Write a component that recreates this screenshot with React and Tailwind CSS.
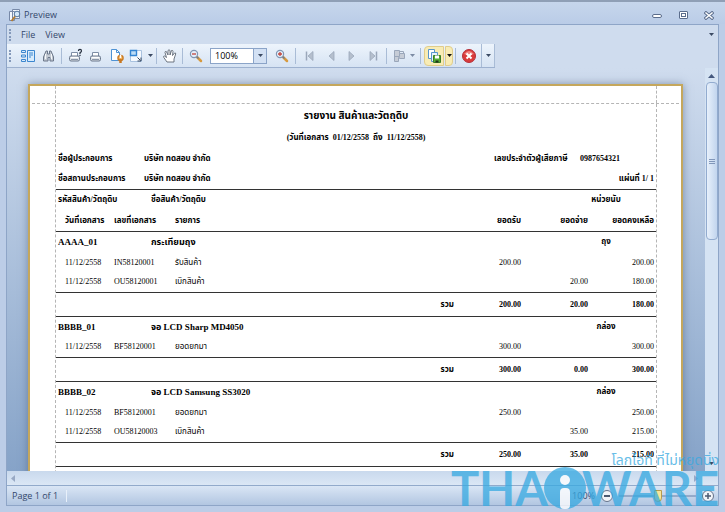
import React from 'react';

const groups = [
  {
    code: 'AAAA_01', name: 'กระเทียมถุง', unit: 'ถุง',
    rows: [
      ['11/12/2558', 'IN58120001', 'รับสินค้า', '200.00', '', '200.00'],
      ['11/12/2558', 'OU58120001', 'เบิกสินค้า', '', '20.00', '180.00'],
    ],
    total: ['200.00', '20.00', '180.00'],
  },
  {
    code: 'BBBB_01', name: 'จอ LCD Sharp MD4050', unit: 'กล่อง',
    rows: [['11/12/2558', 'BF58120001', 'ยอดยกมา', '300.00', '', '300.00']],
    total: ['300.00', '0.00', '300.00'],
  },
  {
    code: 'BBBB_02', name: 'จอ LCD Samsung SS3020', unit: 'กล่อง',
    rows: [
      ['11/12/2558', 'BF58120001', 'ยอดยกมา', '250.00', '', '250.00'],
      ['11/12/2558', 'OU58120003', 'เบิกสินค้า', '', '35.00', '215.00'],
    ],
    total: ['250.00', '35.00', '215.00'],
  },
];

function Svg({ children, w = 16 }) {
  return (
    <svg width={w} height="16" viewBox={`0 0 ${w} 16`} fill="none" aria-hidden="true">
      {children}
    </svg>
  );
}

function Tool({ label, children }) {
  return (
    <button type="button" aria-label={label} className="flex h-5 w-[21px] shrink-0 items-center justify-center">
      {children}
    </button>
  );
}

function Sep({ wide }) {
  return <span className={`${wide ? 'mx-[3px]' : 'mx-0.5'} h-4 w-px shrink-0 bg-[#a9bcd6]`} />;
}

function Caret({ color = '#3b4a63' }) {
  return (
    <svg width="5" height="3" viewBox="0 0 5 3" aria-hidden="true">
      <path d="M0 0h5L2.500 3z" fill={color} />
    </svg>
  );
}

function Grip() {
  return <span className="ml-0.5 mr-1.5 h-3 w-0 shrink-0 border-l-2 border-dotted border-[#8499ba]" />;
}

function Nav({ label, flip, bar }) {
  return (
    <Tool label={label}>
      <svg width="12" height="12" viewBox="0 0 12 12" className={flip ? '-scale-x-100' : ''} aria-hidden="true">
        {bar && <path d="M2.500 1.500v9" stroke="#9aa7ba" strokeWidth="1.500" />}
        <path d="M9 1.500v9L4 6z" fill="#b5bfcd" stroke="#9aa7ba" strokeWidth="0.800" />
      </svg>
    </Tool>
  );
}

function Magnifier({ plus }) {
  return (
    <Svg>
      <path d="M9 9l4 4" stroke="#d79a3e" strokeWidth="2.500" strokeLinecap="round" />
      <path d="M8.500 8.500l2 2" stroke="#6c7c93" strokeWidth="1.500" />
      <circle cx="6" cy="6" r="3.600" fill="#e4effb" stroke="#8196b3" strokeWidth="1.200" />
      <path d={plus ? 'M4 6h4M6 4v4' : 'M4 6h4'} stroke="#c2453c" strokeWidth="1.300" />
    </Svg>
  );
}

function Printer({ query }) {
  return (
    <Svg>
      <path d="M4.500 8V4.500h6V8" fill="#fff" stroke="#7e8ea6" />
      <rect x="2.500" y="8" width="10" height="5" rx="1.500" fill="#dfe3e8" stroke="#69778c" />
      <path d="M4 11.500h7" stroke="#8a96a8" />
      <path d="M4 9.500h7" stroke="#fff" />
      {query && <path d="M11.500 3q0-1.700 1.500-1.700T14.500 3q0 1-1.500 1.700V6M13 6.800V8" stroke="#26303f" strokeWidth="1.200" />}
    </Svg>
  );
}

function TitleBar() {
  return (
    <header className="flex h-6 shrink-0 items-center border-t-2 border-[#8f9fb6] bg-linear-to-b from-[#c6d6ec] to-[#bacce7] pl-2 pt-1 pr-2">
      <Svg w={14}>
        <path d="M1.500 4.500h5v9h-5zM4.500 2.500h7v9h-7z" fill="#f4f8fd" stroke="#7789a8" />
        <circle cx="9" cy="7" r="2.800" fill="#d4e8fa" stroke="#56789f" />
        <path d="M7 9.500L3.500 14" stroke="#b27c32" strokeWidth="2" />
      </Svg>
      <h1 className="ml-0.5 flex-1 text-[9px] leading-4 text-[#33476b]">Preview</h1>
      <div className="flex items-center gap-2.5">
        <button type="button" aria-label="Minimize" className="flex w-4 justify-center pt-0.5">
          <span className="h-1 w-2.5 rounded-sm border border-[#5b6d8c] bg-white" />
        </button>
        <button type="button" aria-label="Maximize" className="flex w-4 justify-center">
          <span className="flex h-2 w-[9px] items-center justify-center rounded-[1px] border border-[#5b6d8c] bg-white">
            <span className="h-1 w-[5px] border border-[#5b6d8c]" />
          </span>
        </button>
        <button type="button" aria-label="Close" className="flex w-4 justify-center">
          <svg width="10" height="9" viewBox="0 0 10 9" aria-hidden="true">
            <path d="M2 2l6 5M8 2L2 7" stroke="#5b6d8c" strokeWidth="3.400" strokeLinecap="square" />
            <path d="M2 2l6 5M8 2L2 7" stroke="#fff" strokeWidth="1.500" strokeLinecap="square" />
          </svg>
        </button>
      </div>
    </header>
  );
}

function Toolbar() {
  return (
    <div role="toolbar" aria-label="Preview tools" className="flex h-6 w-fit shrink-0 items-center border-b border-[#9db1cf] bg-linear-to-b from-[#edf4fc] to-[#d6e3f3]">
      <Grip />
      <Tool label="Document map">
        <Svg>
          <path d="M1.500 2.500h4v2h-4zM1.500 7h4v2h-4zM1.500 11.500h4v2h-4zM7.500 2.500h7v11h-7z" fill="#d7ebfc" stroke="#3b86cf" />
          <path d="M9 5h4M9 7h4M9 9h2" stroke="#3b86cf" />
        </Svg>
      </Tool>
      <Tool label="Search">
        <Svg>
          <path d="M5 3h1.500v3h2V3H10l2.500 6v4H9V9.500H7V13H2.500V9z" fill="#c3cad3" stroke="#6b778a" />
          <path d="M4.500 6v5M10.500 6v5" stroke="#f6f8fa" />
        </Svg>
      </Tool>
      <Sep />
      <Tool label="Print"><Printer query /></Tool>
      <Tool label="Quick print"><Printer /></Tool>
      <Tool label="Page setup">
        <Svg>
          <path d="M2.500 1.500h5l3 3v8h-8z" fill="#fff" stroke="#4f93d4" />
          <path d="M7.500 1.500v3h3" stroke="#4f93d4" />
          <circle cx="11.500" cy="10" r="2.600" fill="#f2b35b" stroke="#c87822" strokeWidth="1.300" />
          <path d="M11.500 11v4" stroke="#c87822" strokeWidth="2.500" />
          <path d="M11.500 7v3" stroke="#fff" strokeWidth="1.500" />
        </Svg>
      </Tool>
      <button type="button" aria-label="Scale" className="flex h-5 w-[27px] shrink-0 items-center justify-center gap-1">
        <Svg>
          <path d="M2.500 2.500h11v11h-11z" fill="#f5f9fe" stroke="#a9c2df" />
          <path d="M2.500 2.500h6v5h-6z" fill="#bcdcf6" stroke="#3384d3" strokeWidth="1.400" />
          <path d="M9.500 9.500l3 3M13 9.500V13H9.500" stroke="#33445f" />
        </Svg>
        <Caret />
      </button>
      <Sep />
      <Tool label="Hand tool">
        <Svg>
          <path d="M5 14L1.800 9.500Q1 8 2.500 8l2 1.500L3 4.500Q3 3 4.300 3.500L6 7V2.500Q7 1 8 2.500V7l1.500-4.500Q11 2 11 3.500L10.500 7.500 12.500 5Q14 4.500 13.700 6L12 11v3z" fill="#fff" stroke="#5f6874" strokeWidth="0.900" />
        </Svg>
      </Tool>
      <Sep />
      <Tool label="Zoom out"><Magnifier /></Tool>
      <div className="mx-1 grid h-4 w-[57px] shrink-0 grid-cols-[1fr_13px] border border-[#8ba4c8] bg-white">
        <select aria-label="Zoom" defaultValue="100%" className="col-span-2 col-start-1 row-start-1 appearance-none bg-transparent pl-1 text-[9px] leading-[14px] text-black">
          <option>50%</option>
          <option>100%</option>
          <option>200%</option>
        </select>
        <span className="pointer-events-none col-start-2 row-start-1 flex items-center justify-center border-l border-[#8ba4c8] bg-[#d3e1f4]">
          <Caret />
        </span>
      </div>
      <Tool label="Zoom in"><Magnifier plus /></Tool>
      <Sep wide />
      <Nav label="First page" bar />
      <Nav label="Previous page" />
      <Nav label="Next page" flip />
      <Nav label="Last page" flip bar />
      <Sep wide />
      <button type="button" aria-label="Multiple pages" className="flex h-5 w-[27px] shrink-0 items-center justify-center gap-1">
        <Svg w={14}>
          <path d="M2.500 2.500h5v3h5v5h-5v-1h-1v4h-4z" fill="#c6ccd6" stroke="#9aa7ba" />
          <path d="M7.500 3.500h4v2M2.500 8.500h5v-3" stroke="#9aa7ba" />
        </Svg>
        <Caret color="#7c8ba4" />
      </button>
      <Sep wide />
      <button type="button" aria-label="Export" className="flex h-5 w-5 shrink-0 items-center justify-center rounded-l-sm border border-[#e0cd8c] bg-[#f8ecb5]">
        <Svg>
          <path d="M2.500 1.500h6v9h-6z" fill="#fff" stroke="#5796cc" />
          <path d="M5.500 4.500h6v9h-6z" fill="#e8f3fd" stroke="#5796cc" />
          <path d="M7.500 7.500h7v7h-7z" fill="#55ab35" stroke="#3b7e27" />
          <path d="M9 7.500h4v3H9z" fill="#fff" />
          <path d="M9.500 12.500h3v2h-3z" fill="#1d321b" />
        </Svg>
      </button>
      <button type="button" aria-label="Export options" className="ml-px flex h-5 w-2 shrink-0 items-center justify-center rounded-r-sm border border-[#e0cd8c] bg-[#f8ecb5]">
        <Caret color="#111" />
      </button>
      <Sep />
      <Tool label="Close preview">
        <Svg>
          <circle cx="8" cy="8" r="6.500" fill="#d93b3b" stroke="#b5303a" />
          <path d="M3 6q5-6 10 0q-5 2-10 0" fill="#ee8583" />
          <path d="M5.500 5.500l5 5M10.500 5.500l-5 5" stroke="#fff" strokeWidth="2" />
        </Svg>
      </Tool>
      <button type="button" aria-label="Toolbar options" className="ml-0.5 flex h-full w-3.5 shrink-0 items-center justify-center border-x border-[#a9bcd6]">
        <Caret />
      </button>
    </div>
  );
}

function ReportTable() {
  return (
    <table className="w-full table-fixed border-collapse text-left text-[8px] leading-3 whitespace-nowrap">
      <colgroup>
        <col className="w-[57px]" />
        <col className="w-[37px]" />
        <col className="w-6" />
        <col />
        <col className="w-[54px]" />
        <col className="w-[67px]" />
        <col className="w-[67px]" />
        <col className="w-9" />
        <col className="w-8" />
      </colgroup>
      <thead>
        <tr className="h-[21px] border-t border-[#333]">
          <th colSpan={2} className="pl-0.5">รหัสสินค้า/วัตถุดิบ</th>
          <th colSpan={5} className="pl-px">ชื่อสินค้า/วัตถุดิบ</th>
          <th className="text-center">หน่วยนับ</th>
          <th />
        </tr>
        <tr className="h-[21px] border-b border-[#333]">
          <th className="pl-[9px]">วันที่เอกสาร</th>
          <th colSpan={2} className="pl-px">เลขที่เอกสาร</th>
          <th colSpan={2} className="pl-px">รายการ</th>
          <th className="text-right">ยอดรับ</th>
          <th className="text-right">ยอดจ่าย</th>
          <th colSpan={2} className="pr-0.5 text-right">ยอดคงเหลือ</th>
        </tr>
      </thead>
      {groups.map((g) => (
        <tbody key={g.code}>
          <tr className="h-[21px]">
            <th colSpan={2} className="pl-0.5 text-[9px]">{g.code}</th>
            <th colSpan={5} className="pl-px text-[9px]">{g.name}</th>
            <th className="text-center">{g.unit}</th>
            <td />
          </tr>
          {g.rows.map((r) => (
            <tr key={r[1]} className="h-5">
              <td className="pl-[9px]">{r[0]}</td>
              <td colSpan={2} className="pl-px">{r[1]}</td>
              <td colSpan={2} className="pl-px">{r[2]}</td>
              <td className="text-right">{r[3]}</td>
              <td className="text-right">{r[4]}</td>
              <td colSpan={2} className="pr-0.5 text-right">{r[5]}</td>
            </tr>
          ))}
          <tr className="h-6 border-y border-[#333] font-bold">
            <td colSpan={4} />
            <td className="text-right">รวม</td>
            <td className="text-right">{g.total[0]}</td>
            <td className="text-right">{g.total[1]}</td>
            <td colSpan={2} className="pr-0.5 text-right">{g.total[2]}</td>
          </tr>
        </tbody>
      ))}
      <tbody>
        <tr className="h-[21px]">
          <th colSpan={2} className="pl-0.5 text-[9px]">BBBB_03</th>
          <th colSpan={5} className="pl-px text-[9px]">ดินสอสี</th>
          <th className="text-center">กล่อง</th>
          <td />
        </tr>
      </tbody>
    </table>
  );
}

function Report() {
  return (
    <article className="mr-[22px] ml-[21px] min-h-[600px] border-2 border-[#c5a75c] bg-white font-['Liberation_Serif','Noto_Sans_Thai','Loma',serif] text-black shadow-[0_0_8px_rgba(60,80,110,0.5)]">
      <div className="mx-0.5 h-[18px] border-b border-dashed border-[#b5b5b5] pr-[22px] pl-[23px]">
        <div className="h-full border-x border-dashed border-[#b5b5b5]" />
      </div>
      <div className="mr-6 ml-[25px] min-h-[580px] border-x border-dashed border-[#b5b5b5]">
        <h2 className="pt-1 text-center text-[10px] leading-4 font-bold">รายงาน สินค้าและวัตถุดิบ</h2>
        <p className="pt-1.5 text-center text-[8px] leading-4 font-bold">(วันที่เอกสาร&nbsp; 01/12/2558&nbsp; ถึง&nbsp; 11/12/2558)</p>
        <dl className="grid grid-cols-[86px_1fr_86px_74px] px-0.5 pt-[3px] text-[8px] leading-5 font-bold whitespace-nowrap">
          <dt>ชื่อผู้ประกอบการ</dt>
          <dd>บริษัท ทดสอบ จำกัด</dd>
          <dt>เลขประจำตัวผู้เสียภาษี</dt>
          <dd>0987654321</dd>
          <dt>ชื่อสถานประกอบการ</dt>
          <dd>บริษัท ทดสอบ จำกัด</dd>
          <div className="col-span-2 flex justify-end gap-0.5">
            <dt>แผ่นที่</dt>
            <dd>1/ 1</dd>
          </div>
        </dl>
        <ReportTable />
      </div>
    </article>
  );
}

function Watermark() {
  return (
    <div className="pointer-events-none absolute right-1.5 bottom-0.5 flex flex-col items-end text-[#36a9e1] opacity-75">
      <p className="text-[14px] leading-3">โลกไอที ที่ไม่หยุดนิ่ง</p>
      <div className="flex h-11 items-center font-['Lato',sans-serif] text-[47px] leading-[44px] font-bold">
        <span>THA</span>
        <svg width="42" height="44" viewBox="0 0 42 44" className="-mx-1" aria-hidden="true">
          <circle cx="21" cy="22" r="21" fill="currentColor" />
          <circle cx="21" cy="14" r="5" fill="#fff" />
          <rect x="16" y="22" width="10" height="21" rx="4" fill="#fff" />
        </svg>
        <span>WARE</span>
      </div>
    </div>
  );
}

export default function App() {
  return (
    <div className="relative flex h-screen flex-col overflow-hidden bg-[#bccde7] font-['Open_Sans','Noto_Sans_Thai',sans-serif] text-[9px] text-[#33476b]">
      <TitleBar />
      <div className="mx-1.5 mb-1.5 flex min-h-0 flex-1 flex-col border border-[#8ea5c7] bg-[#cfdcee]">
        <nav className="flex h-[19px] shrink-0 items-center">
          <Grip />
          <button type="button" className="ml-1 leading-4">File</button>
          <button type="button" className="ml-2.5 leading-4">View</button>
          <span className="mr-1 ml-auto"><Caret /></span>
        </nav>
        <Toolbar />
        <main className="flex min-h-0 flex-1 bg-linear-to-b from-[#cfdcee] to-[#86a3c8]">
          <div className="min-w-0 flex-1 overflow-hidden pt-4">
            <Report />
          </div>
          <div className="flex w-[13px] shrink-0 flex-col items-center bg-[#d5e3f3] pt-1.5">
            <svg width="7" height="4" viewBox="0 0 7 4" aria-hidden="true"><path d="M0 4h7L3.500 0z" fill="#44587e" /></svg>
            <div className="mt-1 flex h-[158px] w-3 flex-col items-center justify-center gap-px rounded-sm border border-[#92abcf] bg-linear-to-r from-[#e7f0fb] to-[#c2d5ee]">
              <span className="h-px w-1.5 bg-[#8197ba]" />
              <span className="h-px w-1.5 bg-[#8197ba]" />
              <span className="h-px w-1.5 bg-[#8197ba]" />
            </div>
            <span className="mt-auto mb-1.5"><Caret /></span>
          </div>
        </main>
        <div className="flex h-3.5 shrink-0 items-center justify-between bg-linear-to-b from-[#c9d9ed] to-[#dbe7f5] pr-5 pl-1">
          <svg width="4" height="7" viewBox="0 0 4 7" aria-hidden="true"><path d="M4 0v7L0 3.500z" fill="#98a9c4" /></svg>
          <svg width="4" height="7" viewBox="0 0 4 7" aria-hidden="true"><path d="M0 0v7L4 3.500z" fill="#98a9c4" /></svg>
        </div>
        <footer className="flex h-5 shrink-0 items-center border-t border-[#92aacb] bg-linear-to-b from-[#dae6f5] to-[#b2c6e1] pr-1 pl-[5px]">
          <span>Page 1 of 1</span>
          <span className="ml-2 h-3 w-px bg-[#e8f0fa]" />
          <label htmlFor="zoom-level" className="ml-auto">100%</label>
          <button type="button" aria-label="Decrease zoom" className="ml-1.5 flex size-3 items-center justify-center rounded-full border border-[#65738b] bg-[#f1f4f8]">
            <span className="h-0.5 w-1.5 bg-[#4c5a71]" />
          </button>
          <input
            id="zoom-level"
            type="range"
            defaultValue="50"
            className="mx-1.5 h-3 w-[77px] appearance-none bg-linear-to-b from-transparent via-[#647fa8] via-50% to-transparent bg-[length:100%_2px] bg-center bg-no-repeat [&::-webkit-slider-thumb]:h-3 [&::-webkit-slider-thumb]:w-2 [&::-webkit-slider-thumb]:appearance-none [&::-webkit-slider-thumb]:rounded-b-sm [&::-webkit-slider-thumb]:border [&::-webkit-slider-thumb]:border-[#b89c4e] [&::-webkit-slider-thumb]:bg-[#f8e49c]"
          />
          <button type="button" aria-label="Increase zoom" className="flex size-3 items-center justify-center rounded-full border border-[#65738b] bg-[#f1f4f8]">
            <svg width="6" height="6" viewBox="0 0 6 6" aria-hidden="true"><path d="M0 3h6M3 0v6" stroke="#4c5a71" strokeWidth="1.500" /></svg>
          </button>
        </footer>
      </div>
      <Watermark />
    </div>
  );
}
